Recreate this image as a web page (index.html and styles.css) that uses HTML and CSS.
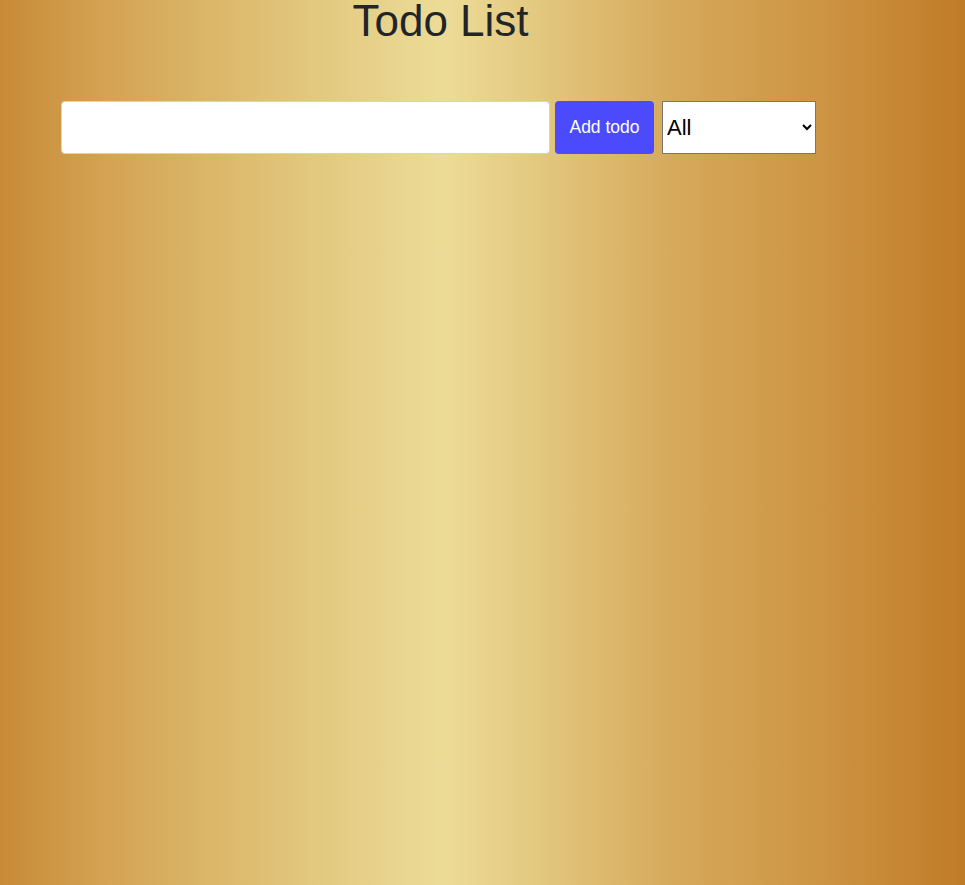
FILE: index.html
```html
<!DOCTYPE html>
<html lang="en">
<head>
<meta charset="utf-8">
<title>Todo List</title>
<link rel="stylesheet" href="styles.css">
</head>
<body>
<div class="app">
  <header class="header">
    <h1 class="title">Todo List</h1>
  </header>
  <form class="todo-form">
    <input class="todo-input" type="text">
    <button class="todo-button" type="button">Add todo</button>
    <select class="filter" name="todos">
      <option value="all">All</option>
      <option value="completed">Completed</option>
      <option value="uncompleted">Uncompleted</option>
    </select>
  </form>
  <div class="todo-container">
    <ul class="todo-list"></ul>
  </div>
</div>
</body>
</html>
```

FILE: styles.css
```css
html, body {
  margin: 0;
  padding: 0;
}

body {
  min-height: 885px;
  font-family: "Liberation Sans", Arial, sans-serif;
  color: #212529;
  background: linear-gradient(to right,
    #c88a37 0%,
    #d4a353 11%,
    #e1c47a 30%,
    #ecdc97 46%,
    #e2c57c 57%,
    #d6a95a 70%,
    #cc9342 86%,
    #c07b26 100%);
}

.app {
  width: 881px;
}

.header {
  text-align: center;
}

.title {
  margin: 0;
  font-size: 44px;
  font-weight: 400;
  line-height: 42px;
  color: #212529;
}

.todo-form {
  display: flex;
  align-items: stretch;
  margin-top: 59px;
  padding-left: 61px;
  height: 53px;
}

.todo-input {
  box-sizing: border-box;
  width: 489px;
  height: 53px;
  margin: 0;
  padding: 6px 12px;
  border: 1px solid #ced4da;
  border-radius: 4px;
  background: #fff;
  font-size: 18px;
  font-family: "Liberation Sans", Arial, sans-serif;
  outline: none;
}

.todo-button {
  box-sizing: border-box;
  width: 99px;
  height: 53px;
  margin: 0 0 0 5px;
  padding: 0;
  border: none;
  border-radius: 4px;
  background: #4b4bfd;
  color: #fff;
  font-family: "Liberation Sans", Arial, sans-serif;
  font-size: 17.5px;
}

.filter {
  box-sizing: border-box;
  width: 154px;
  height: 53px;
  margin: 0 0 0 8px;
  border: 1px solid #767676;
  border-radius: 0;
  background: #fff;
  color: #000;
  font-size: 22px;
}

.todo-container {
  display: flex;
  justify-content: center;
}

.todo-list {
  margin: 0;
  padding: 0;
  list-style: none;
}
```
